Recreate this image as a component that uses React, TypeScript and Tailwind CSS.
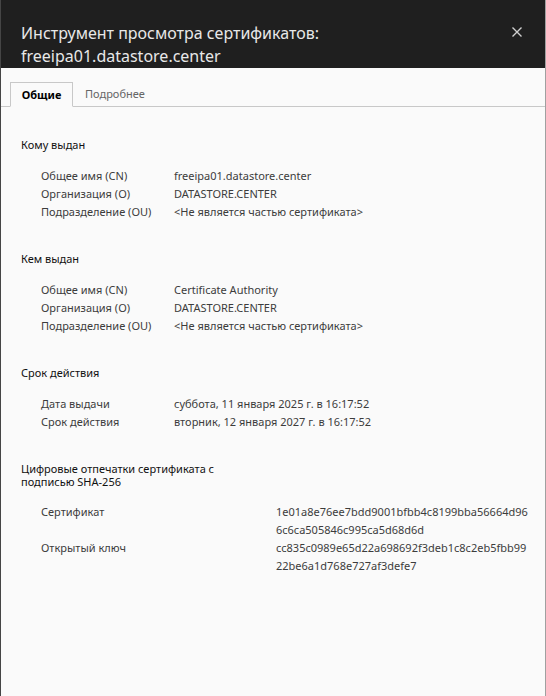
import React from 'react';

interface Row {
  label: string;
  value: string[];
}

interface Section {
  title: string[];
  rows: Row[];
  wide?: boolean;
}

const sections: Section[] = [
  {
    title: ['Кому выдан'],
    rows: [
      { label: 'Общее имя (CN)', value: ['freeipa01.datastore.center'] },
      { label: 'Организация (O)', value: ['DATASTORE.CENTER'] },
      { label: 'Подразделение (OU)', value: ['<Не является частью сертификата>'] },
    ],
  },
  {
    title: ['Кем выдан'],
    rows: [
      { label: 'Общее имя (CN)', value: ['Certificate Authority'] },
      { label: 'Организация (O)', value: ['DATASTORE.CENTER'] },
      { label: 'Подразделение (OU)', value: ['<Не является частью сертификата>'] },
    ],
  },
  {
    title: ['Срок действия'],
    rows: [
      { label: 'Дата выдачи', value: ['суббота, 11 января 2025 г. в 16:17:52'] },
      { label: 'Срок действия', value: ['вторник, 12 января 2027 г. в 16:17:52'] },
    ],
  },
  {
    title: ['Цифровые отпечатки сертификата с', 'подписью SHA-256'],
    wide: true,
    rows: [
      { label: 'Сертификат', value: ['1e01a8e76ee7bdd9001bfbb4c8199bba56664d96', '6c6ca505846c995ca5d68d6d'] },
      { label: 'Открытый ключ', value: ['cc835c0989e65d22a698692f3deb1c8c2eb5fbb99', '22be6a1d768e727af3defe7'] },
    ],
  },
];

const font = { fontFamily: '"Segoe UI", "Noto Sans", sans-serif' };

const App: React.FC = () => {
  return (
    <div
      className="w-[546px] h-[696px] flex flex-col bg-[#fafafa] border-l border-l-[#454545] border-r border-r-[#a0a0a0] overflow-hidden"
      style={font}
    >
      <div className="h-[68px] shrink-0 bg-[#1f1f1f] flex justify-between pl-[20px] pr-[22px] pt-[22px]">
        <div className="text-[16px] leading-[23px] text-[#e8e8e8]">
          <div>Инструмент просмотра сертификатов:</div>
          <div>freeipa01.datastore.center</div>
        </div>
        <button className="w-[12px] h-[12px] mt-[4px] text-[#cfcfcf]">
          <svg viewBox="0 0 12 12" width="12" height="12" fill="none" stroke="currentColor" strokeWidth="1.4">
            <path d="M1.5 1.5 L10.5 10.5 M10.5 1.5 L1.5 10.5" />
          </svg>
        </button>
      </div>

      <div className="flex items-end h-[39px] pl-[9px] border-b border-b-[#c8c8c8] shrink-0">
        <div className="h-[25px] -mb-px w-[63px] pt-[2px] flex items-center justify-center border border-[#c8c8c8] border-b-[#fafafa] bg-[#fafafa] text-[11px] font-bold text-black">
          Общие
        </div>
        <div className="h-[25px] pl-[12px] pt-[2px] flex items-center text-[11px] text-[#666]">Подробнее</div>
      </div>

      <div className="pl-[20px] pt-[29px]">
        {sections.map((s, i) => (
          <div key={i} className={s.title.length > 1 ? '' : 'mb-[29px]'}>
            <div className="text-[11px] leading-[13px] text-[#111] py-[1.5px]">
              {s.title.map((t, j) => (
                <div key={j}>{t}</div>
              ))}
            </div>
            <div className={s.title.length > 1 ? 'mt-[14px]' : 'mt-[15px]'}>
              {s.rows.map((r, j) => (
                <div
                  key={j}
                  className={`grid pl-[20px] text-[11px] text-[#3c3c3c] ${s.wide ? 'grid-cols-[235px_1fr]' : 'grid-cols-[133px_1fr]'}`}
                >
                  <div className="leading-[18px]">{r.label}</div>
                  <div>
                    {r.value.map((v, k) => (
                      <div key={k} className="leading-[18px]">{v}</div>
                    ))}
                  </div>
                </div>
              ))}
            </div>
          </div>
        ))}
      </div>
    </div>
  );
};

export default App;
